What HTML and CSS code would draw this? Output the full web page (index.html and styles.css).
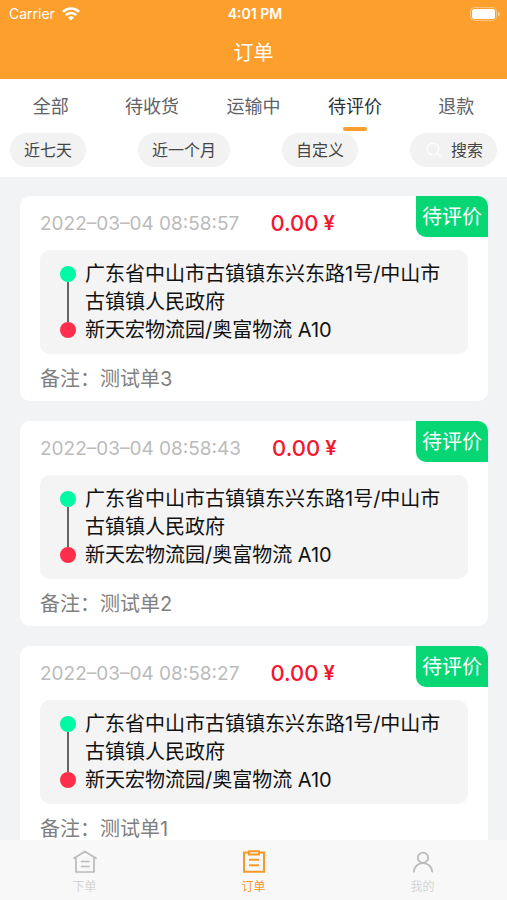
FILE: index.html
```html
<!DOCTYPE html>
<html lang="zh-CN">
<head>
<meta charset="utf-8">
<meta name="viewport" content="width=device-width, initial-scale=1">
<title>订单</title>
<link rel="stylesheet" href="styles.css">
</head>
<body>
<div class="app">
  <header class="header">
    <div class="status">
      <div class="carrier">
        <span>Carrier</span>
        <svg class="wifi" viewBox="0 0 18 14" aria-hidden="true">
          <path d="M1 4.8a11.4 11.4 0 0 1 16 0M3.8 8.100a7.4 7.4 0 0 1 10.4 0" fill="none" stroke="currentColor" stroke-width="2.6"/>
          <path d="M9 13.6 6 10.6a4.300 4.300 0 0 1 6 0z" fill="currentColor"/>
        </svg>
      </div>
      <span class="clock">4:01 PM</span>
      <svg class="battery" viewBox="0 0 31 14" aria-hidden="true">
        <rect x="0.5" y="0.5" width="26" height="13" rx="4" fill="none" stroke="#fff" stroke-opacity="0.4"/>
        <rect x="2" y="2" width="23" height="10" rx="2.5" fill="#fff"/>
        <path d="M28 4.500v5q2-1 2-2.500t-2-2.500z" fill="#fff" fill-opacity="0.5"/>
      </svg>
    </div>
    <h1 class="title">订单</h1>
  </header>

  <nav class="tabs">
    <a class="tab" href="#all">全部</a>
    <a class="tab" href="#receive">待收货</a>
    <a class="tab" href="#transit">运输中</a>
    <a class="tab active" href="#review" aria-current="page">待评价</a>
    <a class="tab" href="#refund">退款</a>
  </nav>

  <div class="filters">
    <button class="chip" type="button">近七天</button>
    <button class="chip" type="button">近一个月</button>
    <button class="chip" type="button">自定义</button>
    <button class="chip search" type="button">
      <svg class="search-icon" viewBox="0 0 16 16" fill="none" stroke="#fff" stroke-width="1.2" stroke-linecap="round" aria-hidden="true"><circle cx="7" cy="7" r="5.8"/><path d="m11.2 11.2 3.6 3.4"/></svg>
      <span>搜索</span>
    </button>
  </div>

  <main class="list">
    <article class="card">
      <div class="card-head">
        <time class="date">2022–03–04 08:58:57</time>
        <strong class="price">0.00<span class="yen">¥</span></strong>
        <span class="badge">待评价</span>
      </div>
      <div class="route">
        <div class="stop from">广东省中山市古镇镇东兴东路1号/中山市古镇镇人民政府</div>
        <div class="stop to">新天宏物流园/奥富物流 A10</div>
      </div>
      <p class="note">备注：测试单3</p>
    </article>

    <article class="card">
      <div class="card-head">
        <time class="date">2022–03–04 08:58:43</time>
        <strong class="price">0.00<span class="yen">¥</span></strong>
        <span class="badge">待评价</span>
      </div>
      <div class="route">
        <div class="stop from">广东省中山市古镇镇东兴东路1号/中山市古镇镇人民政府</div>
        <div class="stop to">新天宏物流园/奥富物流 A10</div>
      </div>
      <p class="note">备注：测试单2</p>
    </article>

    <article class="card">
      <div class="card-head">
        <time class="date">2022–03–04 08:58:27</time>
        <strong class="price">0.00<span class="yen">¥</span></strong>
        <span class="badge">待评价</span>
      </div>
      <div class="route">
        <div class="stop from">广东省中山市古镇镇东兴东路1号/中山市古镇镇人民政府</div>
        <div class="stop to">新天宏物流园/奥富物流 A10</div>
      </div>
      <p class="note">备注：测试单1</p>
    </article>
  </main>

  <nav class="tabbar">
    <a class="item" href="#home">
      <svg class="icon" viewBox="0 0 26 26" fill="none" stroke="currentColor" stroke-width="1.7" stroke-linejoin="round" stroke-linecap="round" aria-hidden="true"><path d="M2 9.300 13 2.600l11 6.700M4 8.600v14.400h18V8.600M9.500 12.500h7.500M9.500 17.500h7.500"/></svg>
      <span>下单</span>
    </a>
    <a class="item current" href="#orders" aria-current="page">
      <svg class="icon" viewBox="0 0 26 26" fill="none" stroke="currentColor" stroke-width="2" aria-hidden="true"><path d="M7.500 3.400H3v19.400h20v-19.400h-4.500M8 2.200h10v3.200H8zM8 10.800h10M8 16.300h10"/></svg>
      <span>订单</span>
    </a>
    <a class="item" href="#me">
      <svg class="icon" viewBox="0 0 26 26" fill="none" stroke="currentColor" stroke-width="1.8" stroke-linecap="round" aria-hidden="true"><circle cx="13" cy="8.800" r="5.200"/><path d="M3.800 22.700c.4-5 4.200-8.600 9.200-8.600s8.800 3.600 9.200 8.600"/></svg>
      <span>我的</span>
    </a>
  </nav>
</div>
</body>
</html>
```
FILE: styles.css
```css
* {
  box-sizing: border-box;
}

body {
  margin: 0;
  font-family: Inter, "Noto Sans CJK SC", sans-serif;
  background: #f2f3f5;
}

a {
  color: inherit;
  text-decoration: none;
}

.app {
  display: flex;
  flex-direction: column;
  height: 100vh;
}

.header {
  flex: none;
  padding-bottom: 10px;
  background: #fd9f2d;
  color: #fff;
}

.status {
  display: grid;
  grid-template-columns: 1fr auto 1fr;
  align-items: center;
  height: 27px;
  padding: 0 6px 0 9px;
  font-size: 14px;
}

.carrier {
  display: flex;
  align-items: center;
  gap: 7px;
}

.wifi {
  width: 18px;
  height: 14px;
}

.clock {
  font-weight: 600;
}

.battery {
  justify-self: end;
  width: 31px;
  height: 14px;
}

.title {
  margin: 0;
  padding-top: 10px;
  font-size: 20px;
  font-weight: 400;
  line-height: 32px;
  text-align: center;
}

.tabs {
  flex: none;
  display: grid;
  grid-template-columns: repeat(5, 1fr);
  background: #fff;
}

.tab {
  display: flex;
  flex-direction: column;
  align-items: center;
  padding-top: 14px;
  font-size: 18px;
  line-height: 28px;
  color: #606266;
}

.tab::after {
  content: "";
  width: 24px;
  height: 4px;
  margin-top: 6px;
  border-radius: 2px;
}

.tab.active {
  color: #303133;
}

.tab.active::after {
  background: #fd9f2d;
}

.filters {
  flex: none;
  display: flex;
  justify-content: space-between;
  padding: 2px 10px 10px;
  background: #fff;
}

.chip {
  height: 34px;
  padding: 0 14px;
  border: 0;
  border-radius: 17px;
  background: #f2f2f2;
  color: #444;
  font-family: inherit;
  font-size: 16px;
  line-height: 24px;
}

.search {
  display: flex;
  align-items: center;
  gap: 7px;
}

.search-icon {
  width: 20px;
  height: 16px;
}

.list {
  flex: 1;
  min-height: 0;
  display: flex;
  flex-direction: column;
  gap: 20px;
  padding: 19px 19px 20px 20px;
  overflow-y: auto;
  scrollbar-width: none;
}

.card {
  flex: none;
  padding: 0 20px 8px;
  border-radius: 10px;
  background: #fff;
}

.card-head {
  display: flex;
  align-items: center;
  height: 54px;
  margin-right: -20px;
}

.date {
  font-size: 19px;
  color: #bbb;
}

.price {
  display: flex;
  align-items: center;
  gap: 5px;
  margin-left: 31px;
  font-size: 22px;
  font-weight: 500;
  color: #f5152f;
}

.yen {
  font-size: 20px;
  font-weight: 600;
}

.badge {
  align-self: flex-start;
  margin-left: auto;
  padding: 7px 6px 6px;
  border-radius: 0 10px 0 10px;
  background: #07d675;
  color: #fff;
  font-size: 20px;
  line-height: 28px;
}

.route {
  padding: 10px 20px;
  border-radius: 10px;
  background: #f4f4f4;
}

.stop {
  position: relative;
  padding-left: 25px;
  font-size: 20px;
  line-height: 28px;
  color: #111;
}

.stop::before {
  content: "";
  position: absolute;
  top: 6px;
  left: 0;
  width: 16px;
  height: 16px;
  border-radius: 50%;
}

.from::before {
  background: #00f9a4;
}

.from::after {
  content: "";
  position: absolute;
  top: 22px;
  bottom: -6px;
  left: 7px;
  width: 2px;
  background: #666;
}

.to::before {
  background: #ff2f4b;
}

.note {
  margin: 0;
  padding-top: 11px;
  font-size: 20px;
  line-height: 28px;
  color: #808080;
}

.tabbar {
  flex: none;
  display: grid;
  grid-template-columns: repeat(3, 1fr);
  height: 60px;
  background: #f8f8f8;
  color: #bbb;
}

.item {
  display: flex;
  flex-direction: column;
  align-items: center;
  gap: 2px;
  padding-top: 9px;
  font-size: 12px;
  line-height: 20px;
}

.item span {
  color: #d4d4d4;
}

.icon {
  width: 26px;
  height: 26px;
}

.current,
.item.current span {
  color: #f69a2b;
}
```
